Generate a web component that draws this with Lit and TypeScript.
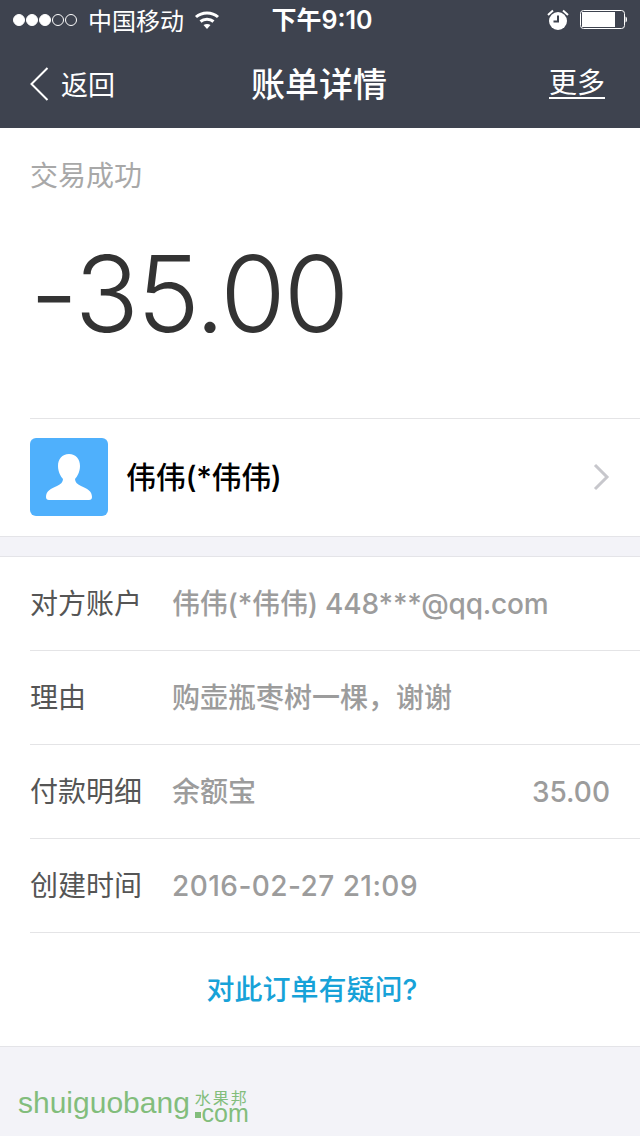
import { LitElement, html, css } from "lit";
import { customElement } from "lit/decorators.js";
import { classMap } from "lit/directives/class-map.js";

const details = [
  { label: "对方账户", value: "伟伟(*伟伟) 448***@qq.com", extra: "", kind: "tight" },
  { label: "理由", value: "购壶瓶枣树一棵，谢谢", extra: "", kind: "" },
  { label: "付款明细", value: "余额宝", extra: "35.00", kind: "" },
  { label: "创建时间", value: "2016-02-27 21:09", extra: "", kind: "numeric" },
];

@customElement("app-root")
export class AppRoot extends LitElement {
  static override styles = css`
    :host {
      display: block;
      width: 640px;
      height: 1136px;
      overflow: hidden;
      background: #f3f3f8;
      font-family: Inter, "Noto Sans CJK SC", sans-serif;
    }
    .header {
      height: 128px;
      background: #3e434f;
      color: #fff;
    }
    .status {
      height: 40px;
      display: grid;
      grid-template-columns: 1fr auto 1fr;
      align-items: center;
      font-size: 24px;
    }
    .status-left {
      display: flex;
      align-items: center;
      padding-left: 13px;
    }
    .carrier {
      margin-bottom: 2px;
    }
    .signal {
      display: flex;
      gap: 1px;
      margin-right: 11px;
    }
    .dot {
      width: 12px;
      height: 12px;
      box-sizing: border-box;
      border-radius: 50%;
      border: 1px solid #fff;
    }
    .dot.on {
      background: #fff;
    }
    .wifi {
      margin-left: 10px;
    }
    .clock {
      font-size: 25px;
      font-weight: 600;
      padding: 0 0 4px 4px;
    }
    .status-right {
      display: flex;
      justify-content: flex-end;
      align-items: center;
      gap: 11px;
      padding-right: 12px;
    }
    .nav {
      height: 88px;
      display: grid;
      grid-template-columns: 1fr auto 1fr;
      align-items: center;
      padding: 0 35px 0 30px;
    }
    .back {
      display: flex;
      align-items: center;
      gap: 12px;
      font-size: 27px;
    }
    .back span {
      margin-bottom: 2px;
    }
    .title {
      padding: 0 0 4px 3px;
      font-size: 34px;
      font-weight: 500;
    }
    .more {
      justify-self: end;
      font-size: 28px;
      line-height: 28px;
      border-bottom: 2px solid #fff;
    }
    .summary {
      background: #fff;
      padding-left: 30px;
      border-bottom: 1px solid #e4e4e8;
    }
    .state {
      padding-top: 32px;
      font-size: 28px;
      line-height: 32px;
      color: #a8a8a8;
    }
    .amount {
      height: 227px;
      box-sizing: border-box;
      padding-top: 40px;
      font-weight: 300;
      font-size: 106px;
      letter-spacing: -2px;
      line-height: 124px;
      color: #333;
      border-bottom: 1px solid #e4e4e6;
    }
    .payee {
      height: 117px;
      box-sizing: border-box;
      display: flex;
      align-items: center;
      padding: 0 30px 2px 0;
    }
    .avatar {
      width: 78px;
      height: 78px;
      border-radius: 6px;
      background: #4fb0fc;
      display: flex;
      align-items: center;
      justify-content: center;
    }
    .payee-name {
      flex: 1;
      margin: 0 0 3px 18px;
      font-size: 30px;
      font-weight: 500;
      letter-spacing: -0.3px;
      color: #000;
    }
    .list {
      margin-top: 19px;
      background: #fff;
      padding-left: 30px;
      border-top: 1px solid #e4e4e8;
      border-bottom: 1px solid #e4e4e8;
    }
    .row {
      height: 93px;
      display: flex;
      align-items: center;
      padding-right: 30px;
      border-bottom: 1px solid #e4e4e6;
      font-size: 28px;
    }
    .label {
      width: 142px;
      padding-bottom: 3px;
      color: #555;
    }
    .value {
      flex: 1;
      padding-bottom: 3px;
      color: #9c9c9c;
      font-weight: 500;
    }
    .value.tight {
      letter-spacing: -0.2px;
    }
    .value.numeric {
      padding-bottom: 0;
      letter-spacing: 0.45px;
    }
    .extra {
      color: #9c9c9c;
      font-weight: 500;
    }
    .ask {
      height: 113px;
      display: flex;
      align-items: center;
      justify-content: center;
      padding: 0 46px 3px 0;
      box-sizing: border-box;
      font-size: 28px;
      font-weight: 500;
      color: #17a2d8;
    }
    .mark {
      display: flex;
      align-items: flex-end;
      padding: 37px 0 0 18px;
      color: #82bd7c;
      font-family: "Liberation Sans", sans-serif;
    }
    .mark-name {
      font-size: 30px;
      line-height: 38px;
    }
    .mark-dot {
      width: 6px;
      height: 6px;
      margin: 0 -6px 4px 5px;
      background: #82bd7c;
    }
    .mark-end {
      display: flex;
      flex-direction: column;
      align-items: flex-end;
      font-size: 25px;
      line-height: 16px;
      margin-bottom: 1px;
    }
    .mark-cn {
      font-size: 16px;
      line-height: 16px;
      letter-spacing: 2px;
      font-family: "Noto Sans CJK SC", sans-serif;
    }
  `;

  override render() {
    return html`
      <div class="header">
        <div class="status">
          <div class="status-left">
            <div class="signal">
              <span class="dot on"></span><span class="dot on"></span><span class="dot on"></span><span class="dot"></span><span class="dot"></span>
            </div>
            <span class="carrier">中国移动</span>
            <svg class="wifi" width="26" height="20" viewBox="0 0 26 20" fill="none" stroke="#fff" stroke-width="3">
              <path d="M2 7 C8 1.500 18 1.500 24 7" />
              <path d="M6.500 11.500 C10 8.500 16 8.500 19.500 11.500" />
              <path d="M13 19 L9.500 15 C11.500 13.500 14.500 13.500 16.500 15 Z" fill="#fff" stroke="none" />
            </svg>
          </div>
          <span class="clock">下午9:10</span>
          <div class="status-right">
            <svg width="22" height="22" viewBox="0 0 22 22">
              <circle cx="11" cy="12" r="9" fill="#fff" />
              <path d="M11 6.500 V12.500 H6.500" fill="none" stroke="#3e434f" stroke-width="2" />
              <path d="M1 6 L6 1.500 M21 6 L16 1.500" stroke="#fff" stroke-width="2" />
            </svg>
            <svg width="48" height="20" viewBox="0 0 48 20">
              <rect x="0.500" y="0.500" width="44" height="18" rx="3" fill="none" stroke="#fff" />
              <rect x="2" y="2" width="33" height="15" fill="#fff" />
              <path d="M45.500 6.500 C47.500 7 47.500 12 45.500 12.500 Z" fill="#fff" />
            </svg>
          </div>
        </div>
        <div class="nav">
          <div class="back">
            <svg width="19" height="34" viewBox="0 0 19 34" fill="none" stroke="#fff" stroke-width="2">
              <path d="M17.500 1 L1.500 17 L17.500 33" />
            </svg>
            <span>返回</span>
          </div>
          <span class="title">账单详情</span>
          <span class="more">更多</span>
        </div>
      </div>
      <div class="summary">
        <div class="state">交易成功</div>
        <div class="amount">-35.00</div>
        <div class="payee">
          <div class="avatar">
            <svg width="48" height="48" viewBox="0 0 48 48" fill="#fff">
              <path d="M24 1 C31 1 35 6 35 13 C35 19 32 24 30 26 C30 29 32 31 36 33 C42 35.500 47 38 47 44 C47 46 46 47 44 47 H4 C2 47 1 46 1 44 C1 38 6 35.500 12 33 C16 31 18 29 18 26 C16 24 13 19 13 13 C13 6 17 1 24 1 Z" />
            </svg>
          </div>
          <span class="payee-name">伟伟(*伟伟)</span>
          <svg width="17" height="28" viewBox="0 0 17 28" fill="none" stroke="#c7c7cc" stroke-width="3">
            <path d="M2 2 L14 14 L2 26" />
          </svg>
        </div>
      </div>
      <div class="list">
        ${details.map(
          (d) => html`
            <div class="row">
              <span class="label">${d.label}</span>
              <span class=${classMap({ value: true, tight: d.kind === "tight", numeric: d.kind === "numeric" })}>${d.value}</span>
              <span class="extra">${d.extra}</span>
            </div>
          `
        )}
        <div class="ask">对此订单有疑问?</div>
      </div>
      <div class="mark">
        <span class="mark-name">shuiguobang</span>
        <span class="mark-dot"></span>
        <div class="mark-end">
          <span class="mark-cn">水果邦</span>
          <span>com</span>
        </div>
      </div>
    `;
  }
}
